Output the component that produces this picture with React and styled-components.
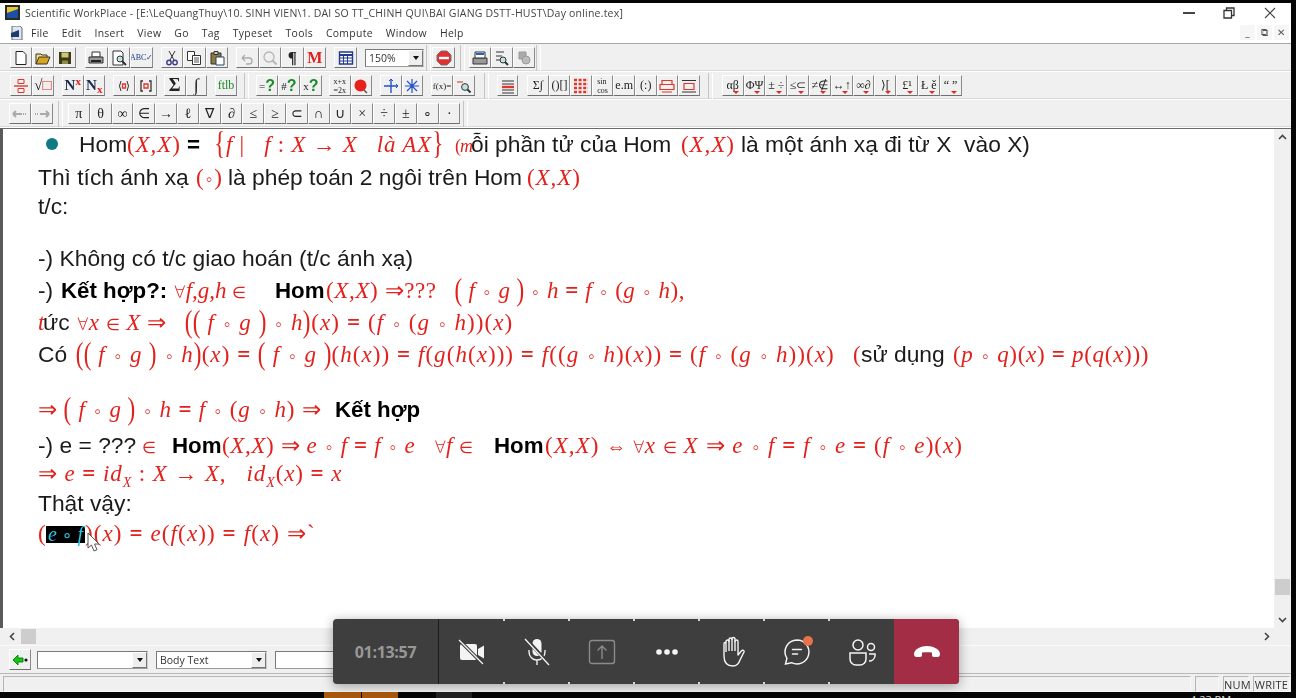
import React from "react";
import styled, { createGlobalStyle } from "styled-components";

const SANS = '"Liberation Sans", Arial, sans-serif';
const SERIF = '"Liberation Serif", "Times New Roman", serif';
const UI = '"Open Sans", "Noto Sans", sans-serif';
const RED = "#e3211c";

const Global = createGlobalStyle`
  html, body { margin: 0; height: 100%; background: #000; overflow: hidden; }
`;

const Page = styled.div`
  position: relative;
  width: 1296px;
  height: 698px;
  overflow: hidden;
  background: #050505;
  padding-top: 3px;
  box-sizing: border-box;
`;

/* the reference is a video frame, everything in the window is a bit soft */
const AppWindow = styled.div`
  width: 1291px;
  height: 689px;
  display: flex;
  flex-direction: column;
  background: #f0f0f0;
  filter: blur(0.4px);
  font-family: ${UI};
`;

const TitleBar = styled.div`
  height: 19px;
  flex: none;
  background: #fff;
  display: flex;
  align-items: center;
  padding-left: 5px;
  color: #444;
  font-size: 10.5px;
  letter-spacing: 0.02em;
  white-space: pre;
`;

const TitleText = styled.span`
  margin-left: 5px;
  flex: 1;
`;

const WinControl = styled.div`
  width: ${(p) => p.$w}px;
  flex: none;
  display: flex;
  justify-content: center;
  align-items: center;
`;

const MenuBar = styled.div`
  height: 22px;
  flex: none;
  box-sizing: border-box;
  background: #fff;
  display: flex;
  align-items: center;
  padding-left: 10px;
  border-bottom: 1px solid #a8a8a8;
  color: #333;
  font-size: 10.4px;
  letter-spacing: 0.03em;
`;

const MenuItems = styled.div`
  display: flex;
  gap: 13px;
  margin-left: 7px;
  flex: 1;
`;

const MdiButton = styled.div`
  width: 15px;
  height: 15px;
  margin-right: 2px;
  background: #f6f6f6;
  color: #555;
  font-size: 10px;
  line-height: 15px;
  text-align: center;
`;

const ToolRow = styled.div`
  height: 28px;
  flex: none;
  box-sizing: border-box;
  display: flex;
  align-items: center;
  padding-left: ${(p) => p.$pad}px;
  border-bottom: 1px solid #fff;
  box-shadow: inset 0 -1px 0 #d8d8d8;
`;

const Gap = styled.div`
  width: ${(p) => p.$w}px;
  height: 26px;
  flex: none;
  display: flex;
  justify-content: center;
  align-items: center;
`;

const Sep = styled.div`
  width: 3px;
  height: 26px;
  border-left: 1px solid #c4c4c4;
  border-right: 1px solid #fff;
`;

const Btn = styled.div`
  position: relative;
  width: ${(p) => p.$w || 22}px;
  height: 21px;
  flex: none;
  box-sizing: border-box;
  background: #f0f0f0;
  border: 1px solid;
  border-color: #fff #8a8a8a #6f6f6f #fff;
  display: flex;
  align-items: center;
  justify-content: center;
  overflow: hidden;
  white-space: pre;
  font-family: ${SERIF};
  font-size: ${(p) => p.$size || 13}px;
  font-weight: ${(p) => (p.$bold ? 700 : 400)};
  color: ${(p) => p.$color || "#222"};
`;

const Drop = styled.i`
  position: absolute;
  right: 4px;
  bottom: 1px;
  border: 3px solid transparent;
  border-top-color: #e02a20;
  border-bottom: 0;
`;

const Q = styled.b`
  color: #1c8a2a;
  font-family: ${SANS};
  font-size: 16px;
`;

const RedBox = styled.span`
  color: ${RED};
`;

/* the button is a flex box, so raise and lower by alignment, not vertical-align */
const Sup = styled.span`
  align-self: flex-start;
  color: ${RED};
  font-size: 11px;
  line-height: 11px;
`;

const Sub = styled.span`
  align-self: flex-end;
  color: ${RED};
  font-size: 11px;
  line-height: 11px;
`;

const Combo = styled.div`
  width: ${(p) => p.$w}px;
  height: ${(p) => p.$h || 17}px;
  flex: none;
  box-sizing: border-box;
  background: #fff;
  border: 1px solid;
  border-color: #7a7a7a #cfcfcf #9a9a9a #7a7a7a;
  display: flex;
  align-items: center;
  justify-content: space-between;
  padding-left: 3px;
  font-family: ${UI};
  font-size: 10.5px;
  color: #333;
`;

const ComboArrow = styled.div`
  width: 15px;
  height: 100%;
  box-sizing: border-box;
  background: #eee;
  border: 1px solid;
  border-color: #fff #777 #777 #fff;
  display: flex;
  align-items: center;
  justify-content: center;
  &::after {
    content: "";
    border: 3px solid transparent;
    border-top: 4px solid #111;
    border-bottom: 0;
  }
`;

const DocArea = styled.div`
  flex: 1;
  min-height: 0;
  display: flex;
  border-top: 1px solid #6b6b6b;
  border-left: 3px solid #5a5a5a;
`;

const Doc = styled.div`
  flex: 1;
  background: #fff;
  padding: 1px 0 0 35px;
  overflow: hidden;
`;

const Line = styled.div`
  height: 28px;
  margin-top: ${(p) => p.$mt || 0}px;
  display: flex;
  align-items: baseline;
  line-height: 28px;
  white-space: pre;
`;

const Run = styled.span`
  flex: none;
  display: inline-block;
  width: ${(p) => (p.$w ? p.$w + "px" : "auto")};
  letter-spacing: ${(p) => p.$ls || 0}px;
`;

const T = styled(Run)`
  font-family: ${SANS};
  font-size: 22.8px;
  color: #1b1b1b;
`;

const B = styled(T)`
  font-size: 22.3px;
  font-weight: 700;
  color: #000;
`;

const M = styled(Run)`
  font-family: ${SERIF};
  font-size: ${(p) => p.$size || 23}px;
  color: ${RED};
`;

const V = styled.i`
  font-style: italic;
`;

const Eq = styled.b`
  font-weight: 700;
`;

/* small relation signs, the document draws them much lighter than the letters */
const Op = styled.span`
  font-size: ${(p) => p.$s || 15}px;
  letter-spacing: 0;
  font-family: "DejaVu Sans", sans-serif;
  font-weight: 300;
`;

const Big = styled.span`
  display: inline-block;
  font-size: 32px;
  font-weight: 400;
  line-height: 0;
  transform: scaleX(0.72);
  margin: 0 -2px;
  vertical-align: -2px;
`;

const Small = styled.sub`
  font-size: 14px;
  line-height: 0;
`;

const Bullet = styled.span`
  flex: none;
  width: 12px;
  height: 12px;
  margin: 0 21px 0 8px;
  border-radius: 50%;
  background: #0f7a85;
  align-self: center;
`;

const Selected = styled(Run)`
  height: 17px;
  line-height: 17px;
  background: #000;
  color: #2ac6ea;
  font-family: ${SERIF};
  font-size: 20px;
  font-style: italic;
  text-align: center;
`;

const Pointer = styled.svg`
  position: absolute;
  left: 87px;
  top: 532px;
`;

const VScroll = styled.div`
  width: 17px;
  flex: none;
  background: #f0f0f0;
  display: flex;
  flex-direction: column;
  align-items: center;
  justify-content: space-between;
  padding: 4px 0;
  box-sizing: border-box;
`;

const VSpacer = styled.div`
  flex: 1;
  display: flex;
  flex-direction: column;
  justify-content: flex-end;
  padding-bottom: 20px;
`;

const Thumb = styled.div`
  width: ${(p) => p.$w}px;
  height: ${(p) => p.$h}px;
  flex: none;
  background: #cdcdcd;
`;

const HScroll = styled.div`
  height: 17px;
  flex: none;
  background: #f0f0f0;
  display: flex;
  align-items: center;
  padding-left: 8px;
`;

const FormatBar = styled.div`
  height: 28px;
  flex: none;
  display: flex;
  align-items: center;
  gap: 8px;
  padding-left: 9px;
  border-top: 1px solid #fafafa;
  box-sizing: border-box;
  & > :first-child { margin-right: -2px; }
`;

const StatusBar = styled.div`
  height: 19px;
  flex: none;
  display: flex;
  gap: 4px;
  padding: 2px 1px 0 3px;
  box-sizing: border-box;
  border-top: 1px solid #b9b9b9;
`;

const StatusCell = styled.div`
  flex: ${(p) => (p.$w ? "none" : 1)};
  width: ${(p) => p.$w}px;
  box-sizing: border-box;
  border: 1px solid;
  border-color: #b5b5b5 #f8f8f8 #f8f8f8 #b5b5b5;
  font-size: 11px;
  line-height: 15px;
  text-align: center;
  color: #333;
  letter-spacing: 0.02em;
`;

const Taskbar = styled.div`
  height: 6px;
  display: flex;
  overflow: hidden;
  padding-left: 324px;
`;

const TaskItem = styled.div`
  width: ${(p) => p.$w}px;
  margin-right: ${(p) => p.$mr}px;
  flex: none;
  background: ${(p) => p.$bg};
`;

const Clock = styled.div`
  margin-left: 718px;
  margin-top: 2px;
  color: #ddd;
  font-size: 11px;
  line-height: 11px;
  font-family: ${UI};
`;

const MeetingBar = styled.div`
  position: absolute;
  left: 333px;
  top: 619px;
  width: 626px;
  height: 65px;
  display: flex;
  border-radius: 4px;
  overflow: hidden;
  background: #3e3e3e;
  box-shadow: 0 2px 12px rgba(0, 0, 0, 0.35);
`;

const Timer = styled.div`
  width: 106px;
  flex: none;
  box-sizing: border-box;
  display: flex;
  align-items: center;
  justify-content: center;
  border-right: 1px solid #1c1c1c;
  color: #989898;
  font-family: ${UI};
  font-weight: 700;
  font-size: 16px;
  letter-spacing: -0.3px;
`;

const MeetBtn = styled.div`
  position: relative;
  width: ${(p) => p.$w || 65}px;
  flex: none;
  display: flex;
  align-items: center;
  justify-content: center;
  background: ${(p) => p.$bg || "transparent"};
  &::before, &::after {
    content: ${(p) => (p.$ticks ? '""' : "none")};
    position: absolute;
    left: -1px;
    width: 2px;
    height: 2px;
    background: #d8d8d8;
  }
  &::before { top: 0; }
  &::after { bottom: 0; }
`;

const Badge = styled.span`
  position: absolute;
  left: 39px;
  top: 17px;
  width: 10px;
  height: 10px;
  border-radius: 50%;
  background: #e8734a;
`;

/* ---- toolbar drawings ---- */
const Ico = ({ children, w = 16, h = 16 }) => (
  <svg width={w} height={h} viewBox="0 0 16 16" fill="none">{children}</svg>
);

const icons = {
  page: <Ico><path d="M3 1.5h7l3 3v10H3z" fill="#fff" stroke="#222" /></Ico>,
  open: <Ico><path d="M1 14V4h5l1 1h5v2" stroke="#333" fill="#f5e27a" /><path d="M1 14l3-7h11l-3 7z" fill="#d9a520" stroke="#333" /></Ico>,
  save: <Ico><path d="M2 2h12v12H2z" fill="#3d3a12" /><path d="M4.5 2.5h7v5h-7z" fill="#c9c77a" /><path d="M5 10.5h6V14H5z" fill="#8d8b50" /></Ico>,
  print: <Ico><path d="M4 2h8v5H4z" fill="#fff" stroke="#333" /><path d="M1 7h14v6H1z" fill="#9a9a9a" stroke="#333" /><path d="M3 11h10" stroke="#222" strokeWidth="2" /></Ico>,
  preview: <Ico><path d="M2 1h8l2 2v12H2z" fill="#fff" stroke="#333" /><circle cx="9" cy="9" r="3" fill="#bfe3e3" stroke="#333" /><path d="M11 11l4 4" stroke="#333" strokeWidth="2" /></Ico>,
  cut: <Ico><path d="M5 1l5 9M11 1L6 10" stroke="#333" /><circle cx="5" cy="12.5" r="2.2" stroke="#3a3a90" strokeWidth="1.4" /><circle cx="11" cy="12.5" r="2.2" stroke="#3a3a90" strokeWidth="1.4" /></Ico>,
  copy: <Ico><path d="M1.5 1.5h7v9h-7z" fill="#fff" stroke="#333" /><path d="M6.5 5.5h8v9h-8z" fill="#fff" stroke="#333" /><path d="M8 8h5M8 10h5M8 12h5" stroke="#555" /></Ico>,
  paste: <Ico><path d="M2 3h10v11H2z" fill="#8d7b3e" stroke="#333" /><path d="M5 1.5h4v3H5z" fill="#ccc" stroke="#333" /><path d="M7 7h8v8H7z" fill="#fff" stroke="#246" /></Ico>,
  undo: <Ico><path d="M3 8h7a3 3 0 010 6H7M3 8l3-3M3 8l3 3" stroke="#aaa" strokeWidth="1.3" /></Ico>,
  find: <Ico><circle cx="7" cy="7" r="5" stroke="#b5b5b5" strokeWidth="1.3" /><path d="M10.5 10.5l4 4" stroke="#b5b5b5" strokeWidth="2" /></Ico>,
  table: <Ico><path d="M1.5 2h13v12h-13z" fill="#fff" stroke="#223a8c" strokeWidth="1.4" /><path d="M1.5 5h13" stroke="#223a8c" strokeWidth="2" /><path d="M5.5 5v9M9.5 5v9M2 8h12M2 11h12" stroke="#223a8c" /></Ico>,
  stop: <Ico><path d="M5 1h6l4 4v6l-4 4H5l-4-4V5z" fill="#e03030" stroke="#777" /><path d="M3 8h10" stroke="#fff" strokeWidth="2.4" /></Ico>,
  texprint: <Ico><path d="M1 8h14v6H1z" fill="#999" stroke="#333" /><path d="M3 2h10v6H3z" fill="#fff" stroke="#333" /><path d="M4 4h8" stroke="#2a5cc0" strokeWidth="2" /></Ico>,
  texview: <Ico><path d="M2 2h8M2 6h6M2 10h4" stroke="#333" /><circle cx="9" cy="10" r="3" fill="#bfe3e3" stroke="#333" /><path d="M11 12l3 3" stroke="#333" strokeWidth="2" /></Ico>,
  texgray: <Ico><path d="M3 2h7v7H3z" fill="#aaa" stroke="#999" /><circle cx="10" cy="10" r="4" fill="#bbb" stroke="#999" /></Ico>,
  frac: <Ico><path d="M5 1.5h6v4H5zM5 10.5h6v4H5z" stroke="#e0362c" /><path d="M1 8h14" stroke="#e0362c" strokeWidth="1.4" /></Ico>,
  box: <Ico><path d="M3 2.5h10v4H3zM1 6.5h14v5H1z" stroke="#e0362c" strokeWidth="1.2" /><path d="M3 14h10" stroke="#e0362c" /></Ico>,
  boxArrow: <Ico><path d="M3 5.5h10v6H3z" stroke="#e0362c" strokeWidth="1.2" /><path d="M1 2.5h14M1 14h14" stroke="#333" /></Ico>,
  lines: <Ico><path d="M2 3h12M2 6h12M2 12h12M2 15h12" stroke="#333" /><path d="M2 9h12" stroke="#e0362c" strokeWidth="2.4" /></Ico>,
  grid: <Ico><path d="M1 2h14M1 6h14M1 10h14M1 14h14" stroke="#e0362c" strokeWidth="2.4" strokeDasharray="3 1.6" /></Ico>,
  blob: <Ico><circle cx="7.5" cy="7.5" r="6" fill="#e8201c" /><path d="M11 12l3 3" stroke="#555" strokeWidth="1.5" /></Ico>,
  axes: <Ico><path d="M8 1v14M1 8h14" stroke="#2450c8" strokeWidth="1.4" /><path d="M8 1l-2 2M8 1l2 2M15 8l-2-2M15 8l-2 2" stroke="#2450c8" /></Ico>,
  axes2: <Ico><path d="M8 1v14M1 8h14M3 3l10 10M13 3L3 13" stroke="#2450c8" strokeWidth="1.2" /></Ico>,
  mag: <Ico><circle cx="9" cy="9" r="3.4" fill="#bfe3e3" stroke="#333" /><path d="M11.5 11.5l3 3" stroke="#333" strokeWidth="2" /><path d="M1 4h6" stroke="#c33" /></Ico>,
  back: <Ico><path d="M1 8h9M1 8l3-3M1 8l3 3" stroke="#aaa" strokeWidth="2" /><path d="M11 8h4" stroke="#aaa" strokeDasharray="1 1" strokeWidth="2" /></Ico>,
  fwd: <Ico><path d="M6 8h9M15 8l-3-3M15 8l-3 3" stroke="#aaa" strokeWidth="2" /><path d="M1 8h4" stroke="#aaa" strokeDasharray="1 1" strokeWidth="2" /></Ico>,
  green: <Ico><path d="M1 8l5-5v3h5v4H6v3z" fill="#18c018" stroke="#0a8a0a" /><circle cx="14" cy="8" r="1.6" fill="#111" /></Ico>,
  paren: <Ico><path d="M5 3q-3 5 0 10M11 3q3 5 0 10" stroke="#333" /><path d="M6.500 6h3v4h-3z" stroke="#e0362c" strokeWidth="1.3" /></Ico>,
  brack: <Ico><path d="M5 3H3v10h2M11 3h2v10h-2" stroke="#333" strokeWidth="1.3" /><path d="M6 6h4v4H6z" stroke="#e0362c" strokeWidth="1.3" /></Ico>,
};

const symbols = ["π", "θ", "∞", "∈", "→", "ℓ", "∇", "∂", "≤", "≥", "⊂", "∩", "∪", "×", "÷", "±", "∘", "·"];
const palette = ["αβ", "ΦΨ", "± ÷", "≤⊂", "≠∉", "↔↑", "∞∂", "⟩[", "£¹", "Ł ě", "“ ”"];
const editTools = ["Σ∫", "()[]", null, "sin\ncos", "e.m", "(:)", null, null];

const Chevron = ({ d }) => (
  <svg width="9" height="9" viewBox="0 0 9 9" fill="none">
    <path d={d} stroke="#444" strokeWidth="1.6" />
  </svg>
);

const CHEV = { up: "M1 6l3.500-3.500L8 6", down: "M1 3l3.500 3.500L8 3", left: "M6 1L2.500 4.500 6 8", right: "M3 1l3.500 3.500L3 8" };

const Slash = () => <path d="M2 3l23 23" stroke="#3e3e3e" strokeWidth="3.4" />;

/* recurring bits of the formulas */
const Ci = () => <Op $s={17}>∘</Op>;
const In = () => <Op $s={16}>∈</Op>;
const All = () => <Op $s={17}>∀</Op>;
const Fg = () => <><Big>(</Big> <V>f</V> <Ci /> <V>g</V> <Big>)</Big></>;
const Fgh = () => <>(<V>f</V> <Ci /> (<V>g</V> <Ci /> <V>h</V>))(<V>x</V>)</>;
const XX = () => <>(<V>X,X</V>)</>;

export default function App() {
  return (
    <Page>
      <Global />
      <AppWindow>
        <TitleBar>
          <svg width="15" height="15" viewBox="0 0 15 15">
            <path d="M0 0h15v15H0z" fill="#2a2a20" />
            <path d="M2 2h11v11H2z" fill="#e8c832" />
            <path d="M2 8l11-4v9H2z" fill="#1c4fa8" />
          </svg>
          <TitleText>Scientific WorkPlace - [E:\LeQuangThuy\10. SINH VIEN\1. DAI SO TT_CHINH QUI\BAI GIANG DSTT-HUST\Day online.tex]</TitleText>
          <WinControl $w={40}><svg width="12" height="2"><path d="M0 1h12" stroke="#444" strokeWidth="2" /></svg></WinControl>
          <WinControl $w={40}>
            <svg width="12" height="12" fill="none" stroke="#333" strokeWidth="1.3"><path d="M1 3.500h7.500V11H1zM3.500 3.500V1H11v7.500H8.500" /></svg>
          </WinControl>
          <WinControl $w={42}>
            <svg width="12" height="12" stroke="#444" strokeWidth="1.1"><path d="M1 1l10 10M11 1L1 11" /></svg>
          </WinControl>
        </TitleBar>

        <MenuBar>
          <svg width="14" height="14" viewBox="0 0 14 14">
            <path d="M2 0h8l2 2v12H2z" fill="#dfe6ef" stroke="#667" />
            <path d="M1 7l8-3v7H1z" fill="#1f3c6e" />
          </svg>
          <MenuItems>
            {["File", "Edit", "Insert", "View", "Go", "Tag", "Typeset", "Tools", "Compute", "Window", "Help"].map((m) => (
              <span key={m}>{m}</span>
            ))}
          </MenuItems>
          <MdiButton>_</MdiButton>
          <MdiButton>⧉</MdiButton>
          <MdiButton>✕</MdiButton>
        </MenuBar>

        <ToolRow $pad={10}>
          <Btn>{icons.page}</Btn><Btn>{icons.open}</Btn><Btn>{icons.save}</Btn>
          <Gap $w={9} />
          <Btn $w={22.67}>{icons.print}</Btn><Btn $w={22.67}>{icons.preview}</Btn>
          <Btn $w={22.67} $size={8} $color="#1f3c8c">ABC✓</Btn>
          <Gap $w={7.6} />
          <Btn $w={22.5}>{icons.cut}</Btn><Btn $w={22.5}>{icons.copy}</Btn><Btn $w={22.5}>{icons.paste}</Btn>
          <Gap $w={8} />
          <Btn $w={22.5}>{icons.undo}</Btn><Btn $w={22.5}>{icons.find}</Btn>
          <Btn $w={22.5} $size={17} $bold>¶</Btn><Btn $w={22.5} $size={16} $bold $color="#e0201c">M</Btn>
          <Gap $w={8} />
          <Btn $w={23}>{icons.table}</Btn>
          <Gap $w={8} />
          <Combo $w={59} $h={18}>150%<ComboArrow /></Combo>
          <Gap $w={8}><Sep /></Gap>
          <Btn $w={23}>{icons.stop}</Btn>
          <Gap $w={14}><Sep /></Gap>
          <Btn>{icons.texprint}</Btn><Btn>{icons.texview}</Btn><Btn>{icons.texgray}</Btn>
          <Gap $w={7}><Sep /></Gap>
        </ToolRow>

        <ToolRow $pad={10}>
          <Btn>{icons.frac}</Btn><Btn $size={15}>√<RedBox>□</RedBox></Btn>
          <Gap $w={8} />
          <Btn $w={21.5} $size={15} $bold $color="#1a2a4a">N<Sup>x</Sup></Btn>
          <Btn $w={21.5} $size={15} $bold $color="#1a2a4a">N<Sub>x</Sub></Btn>
          <Gap $w={8} />
          <Btn>{icons.paren}</Btn><Btn>{icons.brack}</Btn>
          <Gap $w={7} />
          <Btn $w={21.5} $size={18} $bold>Σ</Btn><Btn $w={21.5} $size={18} $bold>∫</Btn>
          <Gap $w={8} />
          <Btn $size={12} $color="#1c8a2a">ftlb</Btn>
          <Gap $w={19}><Sep /></Gap>
          <Btn $size={11}>=<Q>?</Q></Btn><Btn $size={11}>#<Q>?</Q></Btn><Btn $size={11}>x<Q>?</Q></Btn>
          <Gap $w={7} />
          <Btn $w={21.5} $size={8}>{"x+x\n=2x"}</Btn><Btn $w={21.5}>{icons.blob}</Btn>
          <Gap $w={8} />
          <Btn $w={21.5}>{icons.axes}</Btn><Btn $w={21.5}>{icons.axes2}</Btn>
          <Gap $w={8} />
          <Btn $size={9}>f(x)=</Btn><Btn>{icons.mag}</Btn>
          <Gap $w={22}><Sep /></Gap>
          <Btn $w={21}>{icons.lines}</Btn>
          <Gap $w={9} />
          {editTools.map((t, i) =>
            t ? (
              <Btn key={i} $w={21.6} $size={t.includes("\n") ? 8 : 12}>{t}</Btn>
            ) : (
              <Btn key={i} $w={21.6}>{i === 2 ? icons.grid : i === 6 ? icons.box : icons.boxArrow}</Btn>
            )
          )}
          <Gap $w={22}><Sep /></Gap>
          {palette.map((t) => (
            <Btn key={t} $w={21.8} $size={12}>{t}<Drop /></Btn>
          ))}
        </ToolRow>

        <ToolRow $pad={9}>
          <Btn>{icons.back}</Btn><Btn>{icons.fwd}</Btn>
          <Gap $w={15}><Sep /></Gap>
          {symbols.map((s) => (
            <Btn key={s} $w={21.8} $size={14}>{s}</Btn>
          ))}
          <Gap $w={10}><Sep /></Gap>
        </ToolRow>

        <DocArea>
          <Doc>
            <Line>
              <Bullet />
              <T $w={48}>Hom</T>
              <M $w={60} $ls={0.9}><XX /></M>
              <B $w={27}>=</B>
              <M $w={241} $ls={0.7}><Big>{"{"}</Big><V>f</V> |   <V>f </V>: <V>X</V> → <V>X</V>   <V>là AX</V><Big>{"}"}</Big></M>
              <M $w={16} $size={18} $ls={-1}>(<V>m</V></M>
              <T $w={210}>ỗi phần tử của Hom</T>
              <M $w={60} $ls={0.9}><XX /></M>
              <T>là một ánh xạ đi từ X  vào X)</T>
            </Line>
            <Line $mt={5}>
              <T $w={158}>Thì tích ánh xạ</T>
              <M $w={32}>(<Ci />)</M>
              <T $w={299}>là phép toán 2 ngôi trên Hom</T>
              <M $ls={0.9}><XX /></M>
            </Line>
            <Line $mt={1}><T>t/c:</T></Line>
            <Line $mt={24}><T>-) Không có t/c giao hoán (t/c ánh xạ)</T></Line>
            <Line $mt={4}>
              <T $w={23}>-) </T>
              <B $w={113}>Kết hợp?:</B>
              <M $w={101}><All /><V>f,g,h</V> <In /></M>
              <B $w={51}>Hom</B>
              <M $w={129} $ls={0.6}><XX /> ⇒???</M>
              <M $ls={0.5}><Fg /> <Ci /> <V>h</V> <Eq>=</Eq> <V>f</V> <Ci /> (<V>g</V> <Ci /> <V>h</V>),</M>
            </Line>
            <Line $mt={4}>
              <M $w={5}><V>t</V></M>
              <T $w={34}>ức</T>
              <M $w={108} $ls={0.6}><All /><V>x</V> <In /> <V>X</V> ⇒</M>
              <M $ls={1.1}><Big>(</Big><Fg /> <Ci /> <V>h</V><Big>)</Big>(<V>x</V>) <Eq>=</Eq> <Fgh /></M>
            </Line>
            <Line $mt={4}>
              <T $w={38}>Có</T>
              <M $w={777} $ls={1.05}><Big>(</Big><Fg /> <Ci /> <V>h</V><Big>)</Big>(<V>x</V>) <Eq>=</Eq> <Fg />(<V>h</V>(<V>x</V>)) <Eq>=</Eq> <V>f</V>(<V>g</V>(<V>h</V>(<V>x</V>))) <Eq>=</Eq> <V>f</V>((<V>g</V> <Ci /> <V>h</V>)(<V>x</V>)) <Eq>=</Eq> <Fgh /></M>
              <M $w={8}>(</M>
              <T $w={92}>sử dụng</T>
              <M $ls={0.7}>(<V>p</V> <Ci /> <V>q</V>)(<V>x</V>) <Eq>=</Eq> <V>p</V>(<V>q</V>(<V>x</V>)))</M>
            </Line>
            <Line $mt={28}>
              <M $w={297} $ls={0.8}>⇒ <Fg /> <Ci /> <V>h</V> <Eq>=</Eq> <V>f</V> <Ci /> (<V>g</V> <Ci /> <V>h</V>) ⇒</M>
              <B>Kết hợp</B>
            </Line>
            <Line $mt={7}>
              <T $w={104}>-) e = ???</T>
              <M $w={30}><In /></M>
              <B $w={50}>Hom</B>
              <M $w={272} $ls={0.6}><XX /> ⇒ <V>e</V> <Ci /> <V>f</V> <Eq>=</Eq> <V>f</V> <Ci /> <V>e</V>   <All /><V>f</V> <In /></M>
              <B $w={51}>Hom</B>
              <M $ls={1.05}><XX /> <Op $s={20}>⇔</Op> <All /><V>x</V> <In /> <V>X</V> ⇒ <V>e</V> <Ci /> <V>f</V> <Eq>=</Eq> <V>f</V> <Ci /> <V>e</V> <Eq>=</Eq> (<V>f</V> <Ci /> <V>e</V>)(<V>x</V>)</M>
            </Line>
            <Line $mt={1}>
              <M $ls={0.9}>⇒ <V>e</V> <Eq>=</Eq> <V>id</V><Small><V>X</V></Small> : <V>X</V> → <V>X</V>,   <V>id</V><Small><V>X</V></Small>(<V>x</V>) <Eq>=</Eq> <V>x</V></M>
            </Line>
            <Line $mt={1}><T>Thật vậy:</T></Line>
            <Line $mt={3}>
              <M $w={8}>(</M>
              <Selected $w={39}>e <Ci /> f</Selected>
              <M $ls={1.1}>)(<V>x</V>) <Eq>=</Eq> <V>e</V>(<V>f</V>(<V>x</V>)) <Eq>=</Eq> <V>f</V>(<V>x</V>) ⇒`</M>
            </Line>
          </Doc>
          <VScroll>
            <Chevron d={CHEV.up} />
            <VSpacer><Thumb $w={15} $h={16} /></VSpacer>
            <Chevron d={CHEV.down} />
          </VScroll>
        </DocArea>

        <HScroll>
          <Chevron d={CHEV.left} />
          <Gap $w={4} />
          <Thumb $w={15} $h={15} />
          <Gap $w={1226} />
          <Chevron d={CHEV.right} />
        </HScroll>

        <FormatBar>
          <Btn>{icons.green}</Btn>
          <Combo $w={111} $h={18}><span /><ComboArrow /></Combo>
          <Combo $w={111} $h={18}>Body Text<ComboArrow /></Combo>
          <Combo $w={120} $h={18} />
        </FormatBar>

        <StatusBar>
          <StatusCell />
          <StatusCell $w={24} />
          <StatusCell $w={26}>NUM</StatusCell>
          <StatusCell $w={37}>WRITE</StatusCell>
        </StatusBar>
      </AppWindow>

      <Taskbar>
        <TaskItem $w={37} $mr={1} $bg="#a9590f" />
        <TaskItem $w={36} $mr={38} $bg="#a9590f" />
        <TaskItem $w={36} $mr={0} $bg="#222" />
        <Clock>4:23 PM</Clock>
      </Taskbar>

      <Pointer width="14" height="20" viewBox="0 0 14 20">
        <path d="M1 1v15l3.500-3 2.500 6 3-1.300-2.500-5.700H12z" fill="#fff" stroke="#555" />
      </Pointer>

      <MeetingBar>
        <Timer>01:13:57</Timer>
        <MeetBtn>
          <svg width="28" height="28" viewBox="0 0 28 28">
            <path d="M2 8a2 2 0 012-2h13a2 2 0 012 2v12a2 2 0 01-2 2H4a2 2 0 01-2-2z" fill="#f4f4f4" />
            <path d="M20 11l6-3.500v13L20 17z" fill="#f4f4f4" />
            <Slash />
            <path d="M1 2l24 24" stroke="#f4f4f4" strokeWidth="1.300" />
          </svg>
        </MeetBtn>
        <MeetBtn $ticks>
          <svg width="28" height="30" viewBox="0 0 28 30" fill="none">
            <rect x="9.500" y="2" width="9" height="17" rx="4.500" fill="#f4f4f4" />
            <path d="M6 13v2a8 8 0 0016 0v-2M14 23v5" stroke="#f0f0f0" strokeWidth="1.400" />
            <path d="M3 2l24 26" stroke="#3e3e3e" strokeWidth="3.400" />
            <path d="M2 2l24 26" stroke="#f4f4f4" strokeWidth="1.300" />
          </svg>
        </MeetBtn>
        <MeetBtn $ticks>
          <svg width="28" height="26" viewBox="0 0 28 26" fill="none" stroke="#8b8b8b" strokeWidth="1.400">
            <rect x="1.500" y="1.500" width="25" height="23" rx="2.500" />
            <path d="M14 20V7M9.500 11.500L14 7l4.500 4.500" />
          </svg>
        </MeetBtn>
        <MeetBtn $ticks>
          <svg width="24" height="6" viewBox="0 0 24 6" fill="#f4f4f4">
            <circle cx="4" cy="3" r="2.800" /><circle cx="12" cy="3" r="2.800" /><circle cx="20" cy="3" r="2.800" />
          </svg>
        </MeetBtn>
        <MeetBtn $ticks>
          <svg width="26" height="32" viewBox="0 0 26 32" fill="none" stroke="#f4f4f4" strokeWidth="1.400" strokeLinejoin="round">
            <path d="M5 8v12c0 6 3 10 9 10 4 0 6-3 7-6l4-8c.5-1.500-1.500-2.500-2.500-1.200L19 19V5.500c0-2-3-2-3 0V3c0-2-3-2-3 0V3.500c0-2-3-2-3 0V5.500c0-2-3-2-3 .2V16M5 8c0-2 2-2 2-.3" />
            <path d="M10 3.500V15M13 3v12M16 5v10" />
          </svg>
        </MeetBtn>
        <MeetBtn $ticks>
          <svg width="30" height="30" viewBox="0 0 30 30" fill="none" stroke="#f4f4f4" strokeWidth="1.500" strokeLinecap="round">
            <path d="M15 3a12 12 0 11-5.500 22.700L3.500 27l1.400-5.600A12 12 0 0115 3z" />
            <path d="M10.500 12.500h9M10.500 17h5" />
          </svg>
          <Badge />
        </MeetBtn>
        <MeetBtn $ticks>
          <svg width="30" height="28" viewBox="0 0 30 28" fill="none" stroke="#f4f4f4" strokeWidth="1.500">
            <circle cx="11" cy="7" r="5" />
            <circle cx="24" cy="9" r="3.500" />
            <path d="M3 15h16v6a6 6 0 01-6 6H9a6 6 0 01-6-6z" />
            <path d="M22 16h6v2a6 6 0 01-6 5" />
          </svg>
        </MeetBtn>
        <MeetBtn $w={65} $bg="#a32d45">
          <svg width="28" height="14" viewBox="0 0 28 14" fill="#fff">
            <path d="M1 9C1 4 8 1 14 1s13 3 13 8c0 2-1 3-2.500 3H21c-1.500 0-2-1-2-2V7.500C17 7 11 7 9 7.500V10c0 1-.5 2-2 2H3.500C2 12 1 11 1 9z" />
          </svg>
        </MeetBtn>
      </MeetingBar>
    </Page>
  );
}
